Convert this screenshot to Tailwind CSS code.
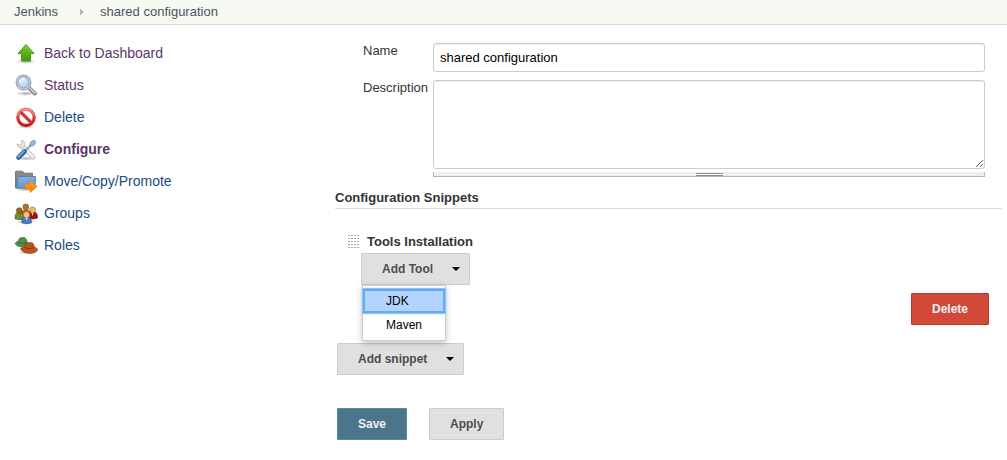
<!DOCTYPE html>
<html lang="en">
<head>
<meta charset="utf-8">
<title>shared configuration - Jenkins</title>
<script src="https://cdn.jsdelivr.net/npm/@tailwindcss/browser@4"></script>
</head>
<body class="min-h-screen bg-white text-[13px] leading-4 text-[#333333] font-['Liberation_Sans',Arial,sans-serif]">
<svg class="absolute size-0" aria-hidden="true">
  <defs>
    <linearGradient id="green" x1="0" y1="0" x2="0" y2="1"><stop offset="0" stop-color="#73c82b"/><stop offset="1" stop-color="#3f9a06"/></linearGradient>
    <linearGradient id="red" x1="0" y1="0" x2="0" y2="1"><stop offset="0" stop-color="#ec7a78"/><stop offset=".5" stop-color="#dc3a3a"/><stop offset="1" stop-color="#cc1014"/></linearGradient>
    <linearGradient id="folder" x1="0" y1="0" x2="0" y2="1"><stop offset="0" stop-color="#87b0df"/><stop offset="1" stop-color="#6a97cd"/></linearGradient>
    <linearGradient id="orange" x1="0" y1="0" x2="0" y2="1"><stop offset="0" stop-color="#ffa544"/><stop offset="1" stop-color="#f57900"/></linearGradient>
    <radialGradient id="glass" cx=".4" cy=".3" r=".8"><stop offset="0" stop-color="#e3eefb"/><stop offset="1" stop-color="#a3c4ea"/></radialGradient>
    <radialGradient id="shade"><stop offset="0" stop-color="#000" stop-opacity=".32"/><stop offset="1" stop-color="#000" stop-opacity="0"/></radialGradient>
  </defs>
</svg>
<header class="border-b border-[#d3d7cf] bg-[#f6faf2]">
  <nav aria-label="Breadcrumb" class="flex h-6 items-center pl-[14px] text-[#4d545d]">
    <a href="#">Jenkins</a>
    <svg class="mr-4 ml-[22px] h-2 w-1" viewBox="0 0 4 8" aria-hidden="true"><path d="M0 0.5L4 4 0 7.5z" fill="#b4b4b4"/></svg>
    <a href="#">shared configuration</a>
  </nav>
</header>
<div class="flex">
  <aside class="w-1/3 max-w-[335px] shrink-0 pt-3 pl-[14px]">
    <nav aria-label="Tasks" class="flex flex-col text-sm leading-8 text-[#204a87]">
      <a href="#" class="flex h-8 items-center gap-[6px] text-[#5c3566]">
        <svg class="size-6" viewBox="0 0 24 24" aria-hidden="true"><ellipse cx="12" cy="20.5" rx="10" ry="2.5" fill="url(#shade)"/><path d="M12 3.5L20 12.5h-3.5v7.500h-9v-7.500H4z" fill="url(#green)" stroke="#4a9b18"/><path d="M12 5.500L17.500 11.500" stroke="#9be05e" stroke-width=".7"/></svg>
        <span>Back to Dashboard</span></a>
      <a href="#" class="flex h-8 items-center gap-[6px] text-[#5c3566]">
        <svg class="size-6" viewBox="0 0 24 24" aria-hidden="true"><ellipse cx="12" cy="20.500" rx="10" ry="2.500" fill="url(#shade)"/><path d="M14.500 14.500L21 20.500" stroke="#8a8a8a" stroke-width="4" stroke-linecap="round"/><path d="M14.500 14.200L21 20" stroke="#c9c9c9" stroke-width="1.800" stroke-linecap="round"/><circle cx="9.500" cy="9.500" r="7.300" fill="#fff" stroke="#a8a8a8" stroke-width="1.400"/><circle cx="9.500" cy="9.500" r="5.700" fill="url(#glass)" stroke="#6b9bd4"/><path d="M5.800 9.500a4 4 0 0 1 5-3.700" fill="none" stroke="#fff" stroke-width="1.200"/></svg>
        <span>Status</span></a>
      <a href="#" class="flex h-8 items-center gap-[6px]">
        <svg class="size-6" viewBox="0 0 24 24" aria-hidden="true"><ellipse cx="12" cy="21.800" rx="9" ry="2" fill="url(#shade)"/><circle cx="12" cy="12.300" r="8.200" fill="#fff" stroke="url(#red)" stroke-width="3.200"/><path d="M6.500 6.800l11 11" stroke="#d92f2f" stroke-width="3.200"/><path d="M4 10.500a8.300 8.300 0 0 1 16 0" fill="none" stroke="#f6a5a3" stroke-width=".8"/></svg>
        <span>Delete</span></a>
      <a href="#" class="flex h-8 items-center gap-[6px] font-bold text-[#5c3566]">
        <svg class="size-6" viewBox="0 0 24 24" aria-hidden="true"><ellipse cx="12" cy="21.500" rx="11" ry="2" fill="url(#shade)"/><path d="M8 9L19.300 20.300" stroke="#b3b6b1" stroke-width="4.400" stroke-linecap="round"/><path d="M8 9L19.300 20.300" stroke="#eceeeb" stroke-width="2.900" stroke-linecap="round"/><path d="M7.500 3.300C10.300 3.500 11.700 6 10.800 8.500L8.500 11C5.500 11.500 2.900 9.800 3 6.800l3 1.700 2.200-2.200z" fill="#e6e8e5" stroke="#b3b6b1" stroke-width=".8"/><path d="M10 15L17.500 7.500" stroke="#9a9fa6" stroke-width="2"/><path d="M15.800 8l1-3L20 3.200l1.800 1.800-1.800 3.200-3 1z" fill="#9dbbe2" stroke="#5a84ba" stroke-width=".8"/><path d="M4.500 20.500l6-6" stroke="#34649f" stroke-width="4.600" stroke-linecap="round"/><path d="M4.300 19.800l5.700-5.700" stroke="#7ba6d6" stroke-width="1.800" stroke-linecap="round"/></svg>
        <span>Configure</span></a>
      <a href="#" class="flex h-8 items-center gap-[6px]">
        <svg class="size-6" viewBox="0 0 24 24" aria-hidden="true"><ellipse cx="12" cy="20.500" rx="11" ry="2" fill="url(#shade)"/><path d="M1.500 19V3q0-.8.800-.8h6.200l1.500 2h8.500v15z" fill="#858985" stroke="#747874"/><path d="M4 7.500h17.500l-.5 11.500H2.900z" fill="url(#folder)" stroke="#5583bb"/><path d="M11 15h5v-3.500l7 6-7 6V20h-5z" fill="url(#orange)" stroke="#ea7d14" stroke-width=".8"/></svg>
        <span>Move/Copy/Promote</span></a>
      <a href="#" class="flex h-8 items-center gap-[6px]">
        <svg class="size-6" viewBox="0 0 24 24" aria-hidden="true"><ellipse cx="12" cy="21" rx="10" ry="2" fill="url(#shade)"/><path d="M7 14c0-4 2-5 5-5s5 1 5 5z" fill="#c95a1c" stroke="#a33f08" stroke-width=".6"/><circle cx="11.800" cy="5.900" r="2.900" fill="#a9742a" stroke="#7c4d10" stroke-width=".6"/><path d="M1 17.800c0-5.300 1.500-6.800 4.500-6.800s4.500 2 4.500 6.800q-4.500 2-9 0z" fill="#718c28" stroke="#455d0a" stroke-width=".6"/><circle cx="5.300" cy="9.600" r="2.900" fill="#9b672a" stroke="#64400f" stroke-width=".6"/><path d="M14 17c0-5.300 1.500-6.500 4.500-6.500s5 1.500 5 6.500q-5 2-9.500 0z" fill="#a80c16" stroke="#710006" stroke-width=".6"/><path d="M17.300 11h2.400l-1.200 4z" fill="#fff"/><circle cx="18.600" cy="9" r="3" fill="#eabb63" stroke="#a06a1e" stroke-width=".6"/><path d="M7.800 21.800c0-5 1.500-6.300 4.700-6.300s5 1.500 5 6.300q-5 2.200-9.700 0z" fill="#477ec3" stroke="#204a87" stroke-width=".6"/><path d="M11.300 16h2.600l-1.300 3.500z" fill="#fff"/><circle cx="12.600" cy="13.800" r="3" fill="#f2c777" stroke="#b47a28" stroke-width=".6"/></svg>
        <span>Groups</span></a>
      <a href="#" class="flex h-8 items-center gap-[6px]">
        <svg class="size-6" viewBox="0 0 24 24" aria-hidden="true"><ellipse cx="13" cy="19.500" rx="10" ry="2" fill="url(#shade)"/><path d="M1 10.500c1-1.700 3-1.500 3.500-2.500C5 5.500 6 4.200 8 4.800c1.600-.7 3.600-.2 4.300 1.700l1.200 3c1 1.500 1 3.500-1 4C8 14.500 3 14 1 10.500z" fill="#4d8f4b" stroke="#2f6832" stroke-width=".7"/><path d="M4.300 8.800c2 1.800 5.500 2 8.700 1" fill="none" stroke="#2c5c2f" stroke-width=".9"/><path d="M6.500 16c1-1.800 3.200-1.500 4.300-2.300.3-2.900 1.700-4.500 3.800-3.700 2-1 4.800-.3 5.200 2l.5 2.200c2 .3 3.700 1.500 2.900 3.400-2.500 3.600-13 4.100-16.700-1.600z" fill="#bd5319" stroke="#8a370c" stroke-width=".7"/><path d="M10.800 14.400c2.500 1.600 6.300 1.700 9.300.2" fill="none" stroke="#7a2f0b" stroke-width=".9"/></svg>
        <span>Roles</span></a>
    </nav>
  </aside>
  <main class="min-w-0 flex-1 pt-[18px] pr-[5px]">
    <form onsubmit="return false">
      <div class="grid grid-cols-[70px_1fr] gap-y-2 pr-[17px] pl-7">
        <label for="name">Name</label>
        <input id="name" type="text" value="shared configuration" class="h-[29px] w-full rounded-[3px] border border-[#cccccc] bg-white px-[6px] text-black shadow-[inset_0_1px_1px_#00000013] outline-none">
        <label for="description">Description</label>
        <div>
          <textarea id="description" class="block h-[89px] w-full resize-y rounded-[3px] border border-[#cccccc] bg-white p-[6px] text-black shadow-[inset_0_1px_1px_#00000013] outline-none"></textarea>
          <div class="mt-[3px] flex h-[5px] justify-center border-x border-b border-[#b9b9b1] bg-[#eeeeee]"><span class="mt-px h-[3px] w-[27px] border-y border-[#888a85] bg-white"></span></div>
        </div>
      </div>
      <h2 class="mt-[13px] border-b border-[#dddddd] pb-[2px] font-bold">Configuration Snippets</h2>
      <section class="pt-[25px] pr-[13px] pl-[13px]">
        <h3 class="flex items-center gap-2 font-bold">
          <svg class="h-[14px] w-[11px]" viewBox="0 0 11 14" aria-hidden="true"><g stroke="#aaa" stroke-dasharray="2 1"><path d="M0 .5h11M0 3.500h11M0 6.500h11M0 9.500h11M0 12.500h11"/></g></svg>
          Tools Installation</h3>
        <div class="relative mt-[3px] ml-[13px] w-fit">
          <button type="button" aria-haspopup="menu" aria-expanded="true" class="flex h-8 items-center gap-[19px] rounded-[1px] border border-[#cccccc] bg-[#e0e0e0] pr-[9px] pl-5 text-xs font-bold text-[#4d4d4d]">Add Tool
            <svg class="h-1 w-2" viewBox="0 0 8 4" aria-hidden="true"><path d="M0 0h8L4 4z" fill="#000"/></svg></button>
          <div role="menu" class="absolute top-full left-px z-10 flex w-[84px] flex-col border border-[#cccccc] bg-white py-[3px] text-black shadow-[0_2px_6px_#00000040]">
            <button type="button" role="menuitem" class="h-6 border-2 border-[#63a8fb] bg-[#b3d4ff] pl-[21px] text-left text-xs shadow-[0_0_1px_1px_#8ec3ff]">JDK</button>
            <button type="button" role="menuitem" class="h-6 pl-[23px] text-left text-xs">Maven</button>
          </div>
        </div>
        <div class="mt-2 flex justify-end">
          <button type="button" class="h-8 rounded-[1px] border border-[#b93a2c] bg-[#d24939] px-5 text-xs font-bold text-[#f0f0f0]">Delete</button>
        </div>
      </section>
      <button type="button" aria-haspopup="menu" class="mt-[18px] ml-[2px] flex h-8 items-center gap-[19px] rounded-[1px] border border-[#cccccc] bg-[#e0e0e0] pr-[9px] pl-5 text-xs font-bold text-[#4d4d4d]">Add snippet
        <svg class="h-1 w-2" viewBox="0 0 8 4" aria-hidden="true"><path d="M0 0h8L4 4z" fill="#000"/></svg></button>
      <div class="mt-[33px] ml-[2px] flex gap-[22px]">
        <button type="submit" class="h-8 rounded-[1px] border border-[#5789a0] bg-[#4b758b] px-5 text-xs font-bold text-[#f0f0f0]">Save</button>
        <button type="button" class="h-8 rounded-[1px] border border-[#cccccc] bg-[#e0e0e0] px-5 text-xs font-bold text-[#4d4d4d]">Apply</button>
      </div>
    </form>
  </main>
</div>
</body>
</html>
